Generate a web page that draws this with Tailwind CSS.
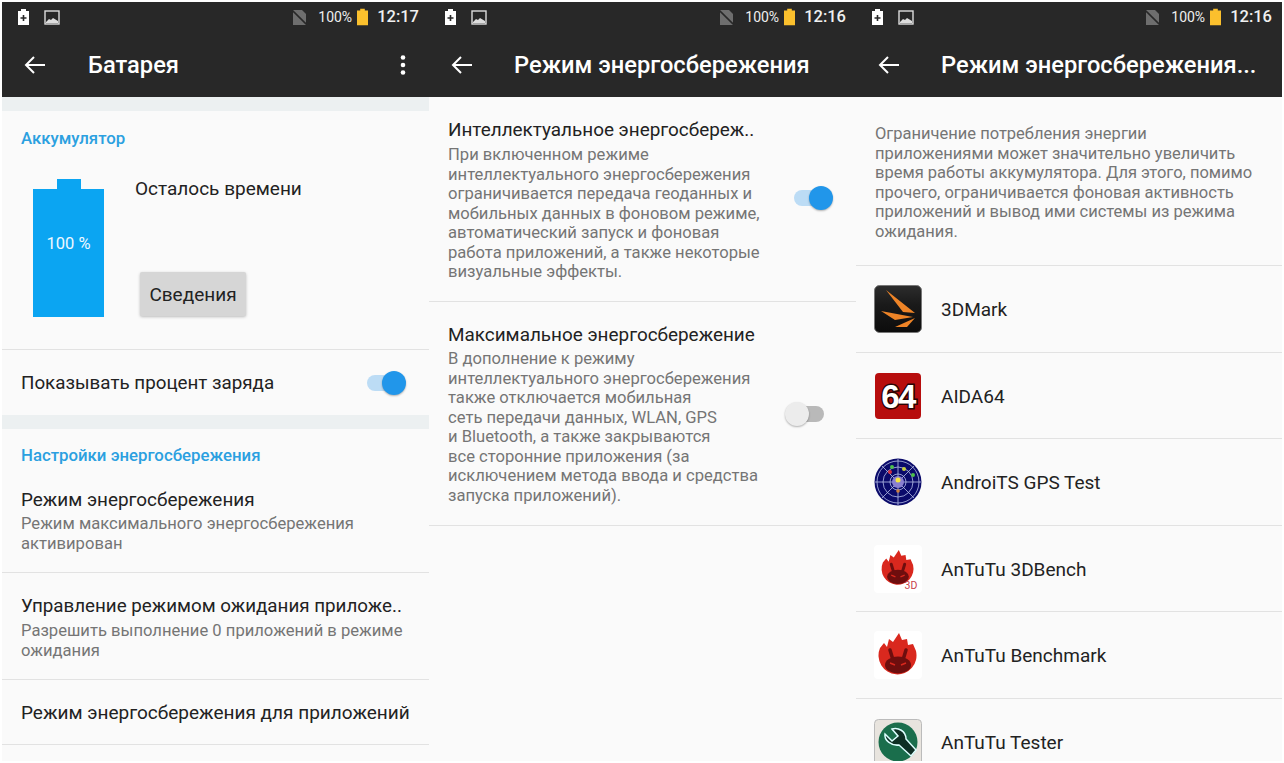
<!DOCTYPE html>
<html lang="ru">
<head>
  <meta charset="UTF-8" />
  <title>Режим энергосбережения</title>
  <script src="https://cdn.jsdelivr.net/npm/@tailwindcss/browser@4"></script>
</head>
<body class="bg-white font-['Roboto',sans-serif] overflow-hidden">
  <div class="w-[1284px] h-[763px] pl-[2px] pt-[2px] flex items-start">

    <!-- Screen 1 -->
    <div class="w-[427px] h-[759px] bg-[#fafafa] overflow-hidden">
      <div class="h-[95px] bg-[#282828] text-white">
        <div class="h-[30px] flex items-center pl-[15px] pr-[10px]">
          <svg width="13" height="16" viewBox="0 0 13 16"><path d="M1 2h3V0h5v2h3v14H1z" fill="#fff"/><path d="M6.500 6v6M3.500 9h6" stroke="#282828" stroke-width="1.600"/></svg>
          <svg class="ml-[14px]" width="16" height="15" viewBox="0 0 16 15"><rect x="1" y="1" width="14" height="13" fill="#282828" stroke="#ddd" stroke-width="1.400"/><path d="M2 12l3-3 2 1 2-2 5 3v2H2z" fill="#ddd"/></svg>
          <svg class="ml-auto" width="15" height="17" viewBox="0 0 15 17"><path d="M1 1h9l4 4v11H1z" fill="#6e6e6e"/><path d="M0 1l15 15" stroke="#282828" stroke-width="1.600"/></svg>
          <span class="ml-[11px] text-[14px] text-[#eee]">100%</span>
          <svg class="ml-[5px]" width="11" height="18" viewBox="0 0 12 18"><path d="M0 2h3.500V0h5v2H12v16H0z" fill="#fbc02d"/></svg>
          <span class="ml-[9px] text-[16.500px] font-medium text-[#f0f0f0]">12:17</span>
        </div>
        <div class="h-[65px] flex items-center pl-[22px] pr-[23px]">
          <svg width="22" height="20" viewBox="0 0 22 20" fill="none" stroke="#fff" stroke-width="2"><path d="M21 10H2M10 2l-8 8 8 8"/></svg>
          <span class="ml-[42px] pt-[3px] text-[23.700px] font-medium leading-none">Батарея</span>
          <svg class="ml-auto" width="6" height="20" viewBox="0 0 6 20" fill="#fff"><circle cx="3" cy="2.500" r="2.300"/><circle cx="3" cy="10" r="2.300"/><circle cx="3" cy="17.500" r="2.300"/></svg>
        </div>
      </div>
      <div class="h-[14px] bg-[#ecf0f1]"></div>

      <div class="h-[239px] border-b border-[#e2e2e2] px-[19px]">
        <p class="pt-[18px] text-[16.800px] leading-[19px] font-medium text-[#2ba0e0]">Аккумулятор</p>
        <div class="mt-[31px] flex">
          <div class="ml-[12px] w-[71px] flex flex-col items-center">
            <div class="w-[24px] h-[10px] bg-[#0ba5f2]"></div>
            <div class="w-[71px] h-[128px] bg-[#0ba5f2] text-[#eef8ff] text-[16.500px] text-center pt-[46px] leading-[18px]">100 %</div>
          </div>
          <div class="ml-[31px] flex flex-col items-start">
            <p class="text-[19px] leading-[19px] text-[#222]">Осталось времени</p>
            <button class="mt-[74px] ml-[5px] w-[106px] h-[44px] pt-[2px] bg-[#d6d6d6] rounded-[2px] shadow-[0_1px_3px_rgba(0,0,0,0.25)] text-[19px] text-[#222]">Сведения</button>
          </div>
        </div>
      </div>

      <div class="h-[65px] px-[19px] flex items-center justify-between">
        <span class="pt-[2px] text-[18.800px] text-[#222]">Показывать процент заряда</span>
        <div class="relative w-[39px] h-[24px] mr-[4px]">
          <div class="absolute left-0 top-[4px] w-[32px] h-[16px] rounded-full bg-[#bcdcf5]"></div>
          <div class="absolute right-0 top-0 w-[24px] h-[24px] rounded-full bg-[#2196ea] shadow-[0_1px_2px_rgba(0,0,0,0.3)]"></div>
        </div>
      </div>
      <div class="h-[14px] bg-[#ecf0f1]"></div>

      <div class="h-[144px] border-b border-[#e2e2e2] px-[19px]">
        <p class="pt-[17px] text-[16.800px] leading-[19px] font-medium text-[#2ba0e0]">Настройки энергосбережения</p>
        <p class="mt-[23px] text-[18.900px] leading-[24px] text-[#222]">Режим энергосбережения</p>
        <p class="mt-[2px] text-[16.600px] leading-[19.500px] text-[#757575]">Режим максимального энергосбережения активирован</p>
      </div>
      <div class="h-[107px] border-b border-[#e2e2e2] px-[19px] pt-[21px]">
        <p class="text-[18.800px] leading-[24px] text-[#222] whitespace-nowrap">Управление режимом ожидания приложе..</p>
        <p class="mt-[3px] text-[16.600px] leading-[19.500px] text-[#757575]">Разрешить выполнение 0 приложений в режиме ожидания</p>
      </div>
      <div class="h-[65px] border-b border-[#e2e2e2] px-[19px] pt-[2px] flex items-center">
        <p class="text-[19px] text-[#222] whitespace-nowrap">Режим энергосбережения для приложений</p>
      </div>
    </div>

    <!-- Screen 2 -->
    <div class="w-[427px] h-[759px] bg-[#fafafa] overflow-hidden">
      <div class="h-[95px] bg-[#282828] text-white">
        <div class="h-[30px] flex items-center pl-[15px] pr-[10px]">
          <svg width="13" height="16" viewBox="0 0 13 16"><path d="M1 2h3V0h5v2h3v14H1z" fill="#fff"/><path d="M6.500 6v6M3.500 9h6" stroke="#282828" stroke-width="1.600"/></svg>
          <svg class="ml-[14px]" width="16" height="15" viewBox="0 0 16 15"><rect x="1" y="1" width="14" height="13" fill="#282828" stroke="#ddd" stroke-width="1.400"/><path d="M2 12l3-3 2 1 2-2 5 3v2H2z" fill="#ddd"/></svg>
          <svg class="ml-auto" width="15" height="17" viewBox="0 0 15 17"><path d="M1 1h9l4 4v11H1z" fill="#6e6e6e"/><path d="M0 1l15 15" stroke="#282828" stroke-width="1.600"/></svg>
          <span class="ml-[11px] text-[14px] text-[#eee]">100%</span>
          <svg class="ml-[5px]" width="11" height="18" viewBox="0 0 12 18"><path d="M0 2h3.500V0h5v2H12v16H0z" fill="#fbc02d"/></svg>
          <span class="ml-[9px] text-[16.500px] font-medium text-[#f0f0f0]">12:16</span>
        </div>
        <div class="h-[65px] flex items-center pl-[22px] pr-[18px]">
          <svg width="22" height="20" viewBox="0 0 22 20" fill="none" stroke="#fff" stroke-width="2"><path d="M21 10H2M10 2l-8 8 8 8"/></svg>
          <span class="ml-[41px] pt-[3px] text-[23.700px] font-medium leading-none whitespace-nowrap">Режим энергосбережения</span>
        </div>
      </div>

      <div class="h-[205px] border-b border-[#e2e2e2] pl-[19px] pt-[21px] flex">
        <div class="w-[320px] shrink-0">
          <p class="text-[18.900px] leading-[24px] text-[#222] whitespace-nowrap">Интеллектуальное энергосбереж..</p>
          <p class="mt-[3px] text-[16.600px] leading-[19.500px] text-[#757575] whitespace-nowrap">При включенном режиме<br>интеллектуального энергосбережения<br>ограничивается передача геоданных и<br>мобильных данных в фоновом режиме,<br>автоматический запуск и фоновая<br>работа приложений, а также некоторые<br>визуальные эффекты.</p>
        </div>
        <div class="relative w-[39px] h-[24px] mt-[68px] ml-[26px]">
          <div class="absolute left-0 top-[4px] w-[32px] h-[16px] rounded-full bg-[#bcdcf5]"></div>
          <div class="absolute right-0 top-0 w-[24px] h-[24px] rounded-full bg-[#2196ea] shadow-[0_1px_2px_rgba(0,0,0,0.3)]"></div>
        </div>
      </div>

      <div class="h-[224px] border-b border-[#e2e2e2] pl-[19px] pt-[21px] flex">
        <div class="w-[320px] shrink-0">
          <p class="text-[18.900px] leading-[24px] text-[#222] whitespace-nowrap">Максимальное энергосбережение</p>
          <p class="mt-[2px] text-[16.600px] leading-[19.500px] text-[#757575] whitespace-nowrap">В дополнение к режиму<br>интеллектуального энергосбережения<br>также отключается мобильная<br>сеть передачи данных, WLAN, GPS<br>и Bluetooth, а также закрываются<br>все сторонние приложения (за<br>исключением метода ввода и средства<br>запуска приложений).</p>
        </div>
        <div class="relative w-[39px] h-[24px] mt-[79px] ml-[17px]">
          <div class="absolute right-0 top-[4px] w-[32px] h-[16px] rounded-full bg-[#b9b9b9]"></div>
          <div class="absolute left-0 top-0 w-[24px] h-[24px] rounded-full bg-[#ececec] shadow-[0_1px_2px_rgba(0,0,0,0.3)]"></div>
        </div>
      </div>
    </div>

    <!-- Screen 3 -->
    <div class="w-[426px] h-[759px] bg-[#fafafa] overflow-hidden">
      <div class="h-[95px] bg-[#282828] text-white">
        <div class="h-[30px] flex items-center pl-[15px] pr-[10px]">
          <svg width="13" height="16" viewBox="0 0 13 16"><path d="M1 2h3V0h5v2h3v14H1z" fill="#fff"/><path d="M6.500 6v6M3.500 9h6" stroke="#282828" stroke-width="1.600"/></svg>
          <svg class="ml-[14px]" width="16" height="15" viewBox="0 0 16 15"><rect x="1" y="1" width="14" height="13" fill="#282828" stroke="#ddd" stroke-width="1.400"/><path d="M2 12l3-3 2 1 2-2 5 3v2H2z" fill="#ddd"/></svg>
          <svg class="ml-auto" width="15" height="17" viewBox="0 0 15 17"><path d="M1 1h9l4 4v11H1z" fill="#6e6e6e"/><path d="M0 1l15 15" stroke="#282828" stroke-width="1.600"/></svg>
          <span class="ml-[11px] text-[14px] text-[#eee]">100%</span>
          <svg class="ml-[5px]" width="11" height="18" viewBox="0 0 12 18"><path d="M0 2h3.500V0h5v2H12v16H0z" fill="#fbc02d"/></svg>
          <span class="ml-[9px] text-[16.500px] font-medium text-[#f0f0f0]">12:16</span>
        </div>
        <div class="h-[65px] flex items-center pl-[22px] pr-[18px]">
          <svg width="22" height="20" viewBox="0 0 22 20" fill="none" stroke="#fff" stroke-width="2"><path d="M21 10H2M10 2l-8 8 8 8"/></svg>
          <span class="ml-[41px] pt-[3px] text-[23.700px] font-medium leading-none whitespace-nowrap">Режим энергосбережения...</span>
        </div>
      </div>

      <div class="h-[169px] border-b border-[#e2e2e2] pl-[19px] pt-[27px]">
        <p class="text-[16.500px] leading-[19.500px] text-[#757575] whitespace-nowrap">Ограничение потребления энергии<br>приложениями может значительно увеличить<br>время работы аккумулятора. Для этого, помимо<br>прочего, ограничивается фоновая активность<br>приложений и вывод ими системы из режима<br>ожидания.</p>
      </div>

      <div class="h-[87px] border-b border-[#e2e2e2] pl-[18px] flex items-center">
        <svg class="w-[48px] h-[48px] shrink-0" viewBox="0 0 48 48">
          <defs><linearGradient id="dm" x1="0" y1="0" x2="0" y2="1"><stop offset="0" stop-color="#2d2d2d"/><stop offset="0.4" stop-color="#1a1a1a"/><stop offset="1" stop-color="#0c0c0c"/></linearGradient></defs>
          <rect x="0.500" y="0.500" width="47" height="47" rx="5" fill="url(#dm)" stroke="#777"/>
          <path d="M12 5l29 23-12-1zM7 26l32 6-18 3zM21 42l20-9-8 9z" fill="#ee8427"/>
        </svg>
        <span class="ml-[19px] pt-[2px] text-[19px] text-[#222]">3DMark</span>
      </div>
      <div class="h-[86px] border-b border-[#e2e2e2] pl-[18px] flex items-center">
        <svg class="w-[48px] h-[48px] shrink-0" viewBox="0 0 48 48">
          <rect x="1" y="1" width="46" height="46" rx="4" fill="#b70d0d"/>
          <text x="24" y="36" text-anchor="middle" font-family="Liberation Sans" font-weight="700" font-size="33" letter-spacing="-1.500" fill="#fff" stroke="#2a0505" stroke-width="3" paint-order="stroke">64</text>
        </svg>
        <span class="ml-[19px] pt-[3px] text-[19px] text-[#222]">AIDA64</span>
      </div>
      <div class="h-[87px] border-b border-[#e2e2e2] pl-[18px] flex items-center">
        <svg class="w-[48px] h-[48px] shrink-0" viewBox="0 0 48 48">
          <circle cx="24" cy="24" r="23.500" fill="#0a0a6a"/>
          <g fill="none" stroke="#b8c0e8" stroke-width="0.800"><circle cx="24" cy="24" r="8"/><circle cx="24" cy="24" r="15"/><circle cx="24" cy="24" r="21"/><path d="M24 1v46M1 24h46M8 8l32 32M40 8L8 40"/></g>
          <circle cx="24" cy="24" r="6" fill="#8a80d0"/><circle cx="24" cy="22" r="2.500" fill="#f5e642"/>
          <circle cx="18" cy="9" r="2" fill="#4cc04c"/><circle cx="30" cy="11" r="2" fill="#c8d040"/><circle cx="39" cy="17" r="2" fill="#4cc04c"/><circle cx="16" cy="14" r="2" fill="#d03040"/><circle cx="24" cy="33" r="1.800" fill="#d08040"/>
        </svg>
        <span class="ml-[19px] pt-[2px] text-[19px] text-[#222]">AndroiTS GPS Test</span>
      </div>
      <div class="h-[86px] border-b border-[#e2e2e2] pl-[18px] flex items-center">
        <svg class="w-[48px] h-[48px] shrink-0" viewBox="0 0 48 48">
          <rect width="48" height="48" rx="4" fill="#fff"/>
          <g transform="translate(3.800 3.300) scale(0.840)">
            <path d="M6 17L10 12L13 16L15 8L19 11L25 2L28 9L33 8L34 14L39 13L42 20A19 19 0 1 1 6 17z" fill="#d9281e"/>
            <path d="M16 19L19 29M32 19L29 29" stroke="#6e0e0e" stroke-width="3.500" stroke-linecap="round"/>
            <ellipse cx="24" cy="34" rx="13" ry="8.500" fill="#6e0e0e"/>
            <path d="M16 32l5 2M32 32l-5 2" stroke="#d9281e" stroke-width="1.500"/>
          </g>
          <text x="37" y="44" text-anchor="middle" font-family="Roboto" font-size="10.500" fill="#c8404a">3D</text>
        </svg>
        <span class="ml-[19px] pt-[3px] text-[19px] text-[#222]">AnTuTu 3DBench</span>
      </div>
      <div class="h-[87px] border-b border-[#e2e2e2] pl-[18px] flex items-center">
        <svg class="w-[48px] h-[48px] shrink-0" viewBox="0 0 48 48">
          <rect width="48" height="48" rx="4" fill="#fff"/>
          <path d="M6 17L10 12L13 16L15 8L19 11L25 2L28 9L33 8L34 14L39 13L42 20A19 19 0 1 1 6 17z" fill="#d9281e"/>
          <path d="M16 19L19 29M32 19L29 29" stroke="#6e0e0e" stroke-width="3.500" stroke-linecap="round"/>
          <ellipse cx="24" cy="34" rx="13" ry="8.500" fill="#6e0e0e"/>
          <path d="M16 32l5 2M32 32l-5 2" stroke="#d9281e" stroke-width="1.500"/>
        </svg>
        <span class="ml-[19px] pt-[2px] text-[19px] text-[#222]">AnTuTu Benchmark</span>
      </div>
      <div class="h-[60px] pl-[18px] pt-[20px] flex items-start">
        <svg class="w-[48px] h-[48px] shrink-0" viewBox="0 0 48 48">
          <rect x="0.500" y="0.500" width="47" height="47" rx="4" fill="#e8e4de" stroke="#bbb"/>
          <circle cx="24" cy="23" r="19.500" fill="#1a6e4c"/>
          <path d="M11 15l7 7 6-5-6-7c6-2 14 2 14 10l10 11-5 6-12-11c-8 1-15-5-14-11z" fill="#0e2f24" stroke="#dff" stroke-width="1.500"/>
        </svg>
        <span class="ml-[19px] mt-[10px] text-[19px] text-[#222]">AnTuTu Tester</span>
      </div>
    </div>
  </div>
</body>
</html>
